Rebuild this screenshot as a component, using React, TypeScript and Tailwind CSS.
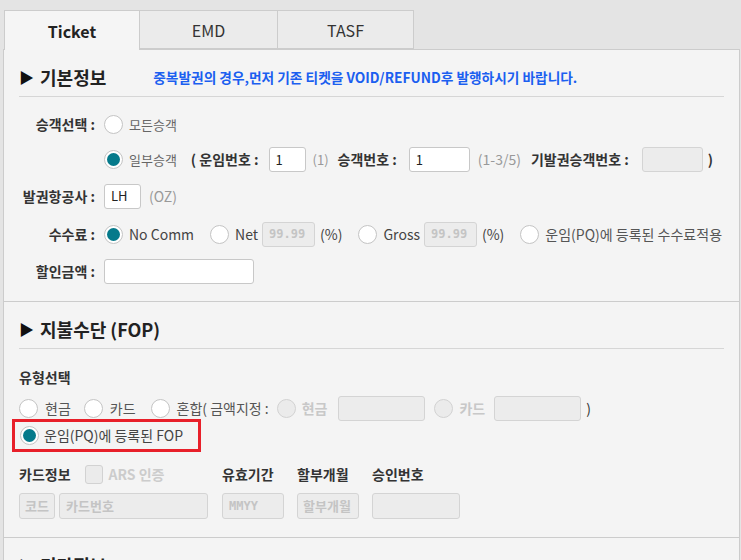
import type { ReactNode } from 'react';

const font = { fontFamily: '"Noto Sans CJK KR", "Noto Sans", sans-serif' };

function Radio({ checked, disabled }: { checked?: boolean; disabled?: boolean }) {
  return (
    <span
      className={`inline-flex items-center justify-center w-[19px] h-[19px] rounded-full border shrink-0 ${
        disabled ? 'bg-[#ebebeb] border-[#d2d2d2]' : 'bg-white border-[#c4c4c4]'
      }`}
    >
      {checked && <span className="w-[13px] h-[13px] rounded-full bg-[#057a8b]" />}
    </span>
  );
}

function Field({ w, value, placeholder, disabled, mono, h = 'h-[25px]', px = 'px-[6px]' }: {
  w: string; value?: string; placeholder?: string; disabled?: boolean; mono?: boolean; h?: string; px?: string;
}) {
  return (
    <div
      className={`${w} ${h} ${px} shrink-0 whitespace-nowrap overflow-hidden rounded-[3px] border flex items-center text-[13px] ${
        disabled ? 'bg-[#ececec] border-[#d4d4d4] text-[#c4c4c4]' : 'bg-white border-[#c8c8c8] text-[#222]'
      } ${mono ? 'font-bold' : ''}`}
      style={mono ? { fontFamily: '"DejaVu Sans Mono", monospace', fontSize: '12px' } : undefined}
    >
      {value ?? placeholder}
    </div>
  );
}

function Label({ children }: { children: ReactNode }) {
  return <div className="w-[77px] shrink-0 text-right text-[14px] font-bold text-[#333] pr-[1px]">{children}</div>;
}

function SectionHead({ title, note }: { title: string; note?: string }) {
  return (
    <div className="h-[47px] pt-[8px] flex items-center border-b border-[#d6d6d6]">
      <span className="text-[15px] text-[#111] mr-[6px]">▶</span>
      <span className="text-[18px] font-bold text-[#222]">{title}</span>
      {note && <span className="ml-[47px] text-[13.7px] font-bold text-[#1b5ff0] whitespace-nowrap">{note}</span>}
    </div>
  );
}

export default function App() {
  return (
    <div className="w-[741px] h-[560px] bg-[#e4e4e4] overflow-hidden pt-[10px]" style={font}>
      <div className="flex ml-[4px] h-[39px]">
        <div className="relative z-10 w-[136px] h-[40px] bg-[#f5f5f5] border border-b-0 border-[#cccccc] flex items-center justify-center text-[16px] font-bold text-[#222]">
          Ticket
        </div>
        <div className="w-[138px] h-[39px] bg-[#ebebeb] border border-l-0 border-[#cccccc] flex items-center justify-center text-[16px] text-[#333]">
          EMD
        </div>
        <div className="w-[136px] h-[39px] bg-[#ebebeb] border border-l-0 border-[#cccccc] flex items-center justify-center text-[16px] text-[#333]">
          TASF
        </div>
      </div>

      <div className="ml-[3px] w-[737px] h-[520px] bg-[#f4f4f4] border border-[#cccccc] border-b-0">
        {/* 기본정보 */}
        <div className="border-b border-[#cccccc] pb-[12px]">
          <div className="px-[15px]">
            <SectionHead title="기본정보" note="중복발권의 경우,먼저 기존 티켓을 VOID/REFUND후 발행하시기 바랍니다." />
          </div>
          <div className="pl-[15px]">
            <div className="mt-[10px] h-[35px] flex items-center">
              <Label>승객선택 :</Label>
              <div className="ml-[8px] flex items-center gap-[6px] text-[13px] text-[#666]">
                <Radio /> 모든승객
              </div>
            </div>
            <div className="h-[35px] flex items-center whitespace-nowrap">
              <div className="w-[77px] shrink-0" />
              <div className="ml-[8px] flex items-center gap-[6px] text-[13px] text-[#666]">
                <Radio checked /> 일부승객
              </div>
              <span className="ml-[14px] text-[14px] font-bold text-[#333]">( 운임번호 :</span>
              <div className="ml-[10px]"><Field w="w-[37px]" value="1" /></div>
              <span className="ml-[7px] text-[13px] text-[#999]">(1)</span>
              <span className="ml-[9px] text-[14px] font-bold text-[#333]">승객번호 :</span>
              <div className="ml-[12px]"><Field w="w-[61px]" value="1" /></div>
              <span className="ml-[8px] text-[14px] text-[#999]">(1-3/5)</span>
              <span className="ml-[10px] text-[14px] font-bold text-[#333]">기발권승객번호 :</span>
              <div className="ml-[13px]"><Field w="w-[61px]" disabled /></div>
              <span className="ml-[5px] text-[14px] font-bold text-[#333]">)</span>
            </div>
            <div className="h-[38px] flex items-center">
              <Label>발권항공사 :</Label>
              <div className="ml-[8px]"><Field w="w-[37px]" value="LH" /></div>
              <span className="ml-[8px] text-[14px] text-[#999]">(OZ)</span>
            </div>
            <div className="h-[38px] flex items-center text-[14px] text-[#444] whitespace-nowrap">
              <Label>수수료 :</Label>
              <div className="ml-[8px] flex items-center gap-[6px]"><Radio checked /> No Comm</div>
              <div className="ml-[16px] flex items-center gap-[6px]"><Radio /> Net</div>
              <div className="ml-[4px]"><Field w="w-[53px]" value="99.99" disabled mono /></div>
              <span className="ml-[5px]">(%)</span>
              <div className="ml-[16px] flex items-center gap-[6px]"><Radio /> Gross</div>
              <div className="ml-[4px]"><Field w="w-[53px]" value="99.99" disabled mono /></div>
              <span className="ml-[5px]">(%)</span>
              <div className="ml-[16px] flex items-center gap-[6px] text-[#555]"><Radio /> 운임(PQ)에 등록된 수수료적용</div>
            </div>
            <div className="h-[36px] flex items-center">
              <Label>할인금액 :</Label>
              <div className="ml-[8px]"><Field w="w-[150px]" /></div>
            </div>
          </div>
        </div>

        {/* 지불수단 */}
        <div className="border-b border-[#cccccc] pb-[18px]">
          <div className="px-[15px]">
            <SectionHead title="지불수단 (FOP)" />
          </div>
          <div className="pl-[15px]">
            <div className="mt-[14px] h-[28px] flex items-center text-[14px] font-bold text-[#333]">유형선택</div>
            <div className="mt-[4px] h-[26px] flex items-center text-[14px] text-[#555] whitespace-nowrap">
              <div className="flex items-center gap-[7px]"><Radio /> 현금</div>
              <div className="ml-[13px] flex items-center gap-[7px]"><Radio /> 카드</div>
              <div className="ml-[15px] flex items-center gap-[7px]"><Radio /> 혼합( 금액지정 :</div>
              <div className="ml-[8px] flex items-center gap-[6px] text-[#c8c8c8] font-bold"><Radio disabled /> 현금</div>
              <div className="ml-[11px]"><Field w="w-[87px]" disabled /></div>
              <div className="ml-[9px] flex items-center gap-[6px] text-[#c8c8c8] font-bold"><Radio disabled /> 카드</div>
              <div className="ml-[9px]"><Field w="w-[87px]" disabled /></div>
              <span className="ml-[5px] text-[#333]">)</span>
            </div>
            <div className="-ml-[7px] -mt-[2px] w-[189px] h-[33px] border-[3px] border-[#e8202a] flex items-center pl-[5px] gap-[5px] text-[14px] text-[#444] whitespace-nowrap">
              <Radio checked /> 운임(PQ)에 등록된 FOP
            </div>
            <div className="mt-[9px] h-[26px] flex items-center text-[14px] font-bold text-[#333] whitespace-nowrap">
              <div className="w-[203px] flex items-center">
                카드정보
                <span className="ml-[14px] w-[18px] h-[19px] rounded-[3px] border border-[#d2d2d2] bg-[#ebebeb]" />
                <span className="ml-[6px] text-[#cccccc]">ARS 인증</span>
              </div>
              <div className="w-[75px]">유효기간</div>
              <div className="w-[75px]">할부개월</div>
              <div>승인번호</div>
            </div>
            <div className="mt-[6px] flex items-center font-bold">
              <div className="w-[203px] flex items-center gap-[4px]">
                <Field w="w-[36px]" placeholder="코드" disabled h="h-[26px]" px="px-[5px]" />
                <Field w="w-[149px]" placeholder="카드번호" disabled h="h-[26px]" />
              </div>
              <div className="w-[75px]"><Field w="w-[62px]" placeholder="MMYY" disabled mono h="h-[26px]" /></div>
              <div className="w-[75px]"><Field w="w-[62px]" placeholder="할부개월" disabled h="h-[26px]" px="px-[5px]" /></div>
              <Field w="w-[88px]" disabled h="h-[26px]" />
            </div>
          </div>
        </div>

        <div className="px-[15px]">
          <SectionHead title="기타정보" />
        </div>
      </div>
    </div>
  );
}
